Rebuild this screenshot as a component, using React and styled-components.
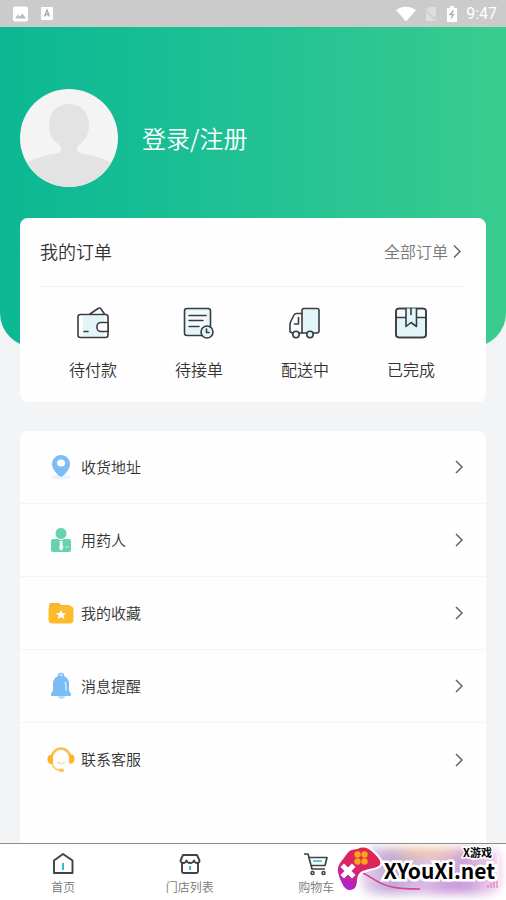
import styled, { createGlobalStyle } from "styled-components";

const GlobalStyle = createGlobalStyle`
  * {
    box-sizing: border-box;
  }
  body {
    margin: 0;
    background: #f3f4f6;
    color: #333;
    font-family: "Noto Sans CJK SC", "Noto Sans", sans-serif;
    font-weight: 350;
  }
  button {
    border: none;
    padding: 0;
    background: none;
    color: inherit;
    font: inherit;
    cursor: pointer;
  }
  a {
    color: inherit;
    text-decoration: none;
  }
  svg {
    display: block;
    flex: none;
  }
`;

const Page = styled.div`
  min-height: 100vh;
  display: flex;
  flex-direction: column;
`;

const StatusBar = styled.div`
  height: 27px;
  padding: 0 9px 0 12px;
  display: flex;
  align-items: center;
  justify-content: space-between;
  background: #cbcbcb;
  color: #fff;
`;

const StatusGroup = styled.div`
  display: flex;
  align-items: center;
  gap: ${(props) => props.$gap};
`;

const Clock = styled.span`
  font-family: Roboto, sans-serif;
  font-size: 16px;
  font-weight: 400;
  line-height: 27px;
`;

const Hero = styled.header`
  padding: 62px 20px 160px;
  background: linear-gradient(90deg, #0bb893, #21c194 50%, #39cc8f);
  border-radius: 0 0 34px 34px;
`;

const Profile = styled.button`
  display: flex;
  align-items: center;
  gap: 24px;
  color: #fff;
  font-size: 24px;
  line-height: 36px;
`;

const Card = styled.section`
  margin: 0 20px;
  background: #fefefe;
  border-radius: ${(props) => (props.$open ? "8px 8px 0 0" : "8px")};
`;

const OrderCard = styled(Card)`
  margin-top: -129px;
  margin-bottom: 29px;
  padding: 0 22px 0 20px;
`;

const MenuCard = styled(Card)`
  flex: 1;
  padding-bottom: 45px;
`;

const CardHead = styled.div`
  height: 69px;
  padding: 0 2px 2px 0;
  display: flex;
  align-items: center;
  justify-content: space-between;
  border-bottom: 1px solid #f2f2f2;
`;

const CardTitle = styled.h2`
  margin: 0;
  font-size: 18px;
  font-weight: 350;
  line-height: 28px;
`;

const AllOrders = styled.a`
  display: flex;
  align-items: center;
  gap: 4px;
  color: #777;
  font-size: 16px;
  line-height: 24px;
`;

const OrderGrid = styled.div`
  display: grid;
  grid-template-columns: repeat(4, 1fr);
  padding: 18px 0 21px;
`;

const OrderItem = styled.button`
  display: flex;
  flex-direction: column;
  align-items: center;
  gap: 16px;
  font-size: 16px;
  line-height: 24px;
`;

const MenuRow = styled.a`
  height: 73px;
  padding: 0 22px 0 27px;
  display: flex;
  align-items: center;
  gap: 6px;
  font-size: 15px;
  border-bottom: 1px solid #f4f4f5;
  &:last-child {
    border-bottom: none;
  }
`;

const MenuLabel = styled.span`
  flex: 1;
  padding-bottom: 2px;
`;

const TabBar = styled.nav`
  position: relative;
  height: 57px;
  display: grid;
  grid-template-columns: repeat(4, 1fr);
  background: #fff;
  border-top: 1px solid #8b8b8b;
`;

const Tab = styled.a`
  display: flex;
  flex-direction: column;
  align-items: center;
  padding-top: 7px;
  gap: 1px;
  color: #777;
  font-size: 12px;
  line-height: 18px;
`;

const Badge = styled.div`
  position: absolute;
  right: 0;
  top: 0;
  width: 171px;
  height: 56px;
  overflow: hidden;
`;

const Glow = styled.div`
  position: absolute;
  inset: 4px 5px 6px 26px;
  border-radius: 12px;
  background:
    radial-gradient(ellipse 34px 12px at 40% 4%, #eec092, transparent),
    radial-gradient(ellipse 26px 12px at 60% 6%, #efc0a8, transparent),
    radial-gradient(ellipse 36px 14px at 62% 90%, #c795dc, transparent),
    linear-gradient(90deg, #e9d5ee, #bfa6d6 22%, #e2c8ea 50%, #c9a0dc 72%, #f6d4ea);
  filter: blur(5px);
`;

const PadIcon = styled.svg`
  position: absolute;
  left: 0;
  top: 1px;
`;

const BadgeText = styled.div`
  position: absolute;
  right: ${(props) => props.$right};
  top: ${(props) => props.$top};
  color: #000;
  font-size: ${(props) => props.$size};
  line-height: ${(props) => props.$size};
  font-weight: 700;
  white-space: nowrap;
  -webkit-text-stroke: ${(props) => props.$outline} #fff;
  paint-order: stroke fill;
`;

const Chevron = ({ color = "#666", size = 14 }) => (
  <svg width="10" height={size} viewBox="0 0 10 14" fill="none" stroke={color} strokeWidth="1.5">
    <path d="M2 1l6 6-6 6" />
  </svg>
);

const Avatar = () => (
  <svg width="98" height="98" viewBox="0 0 98 98">
    <defs>
      <clipPath id="face">
        <circle cx="49" cy="49" r="49" />
      </clipPath>
    </defs>
    <g clipPath="url(#face)">
      <rect width="98" height="98" fill="#f4f4f4" />
      <path
        fill="#e4e3e3"
        d="M49 15c12 0 20 9 20 21 0 9-3 14-8 18-3 2-4 4-4 6 0 3 2 4 6 5 10 1 19 4 27 8l8 25H0l8-25c8-4 17-7 27-8 4-1 6-2 6-5 0-2-1-4-4-6-5-4-8-9-8-18 0-12 8-21 20-21z"
      />
    </g>
  </svg>
);

const OrderSvg = ({ children }) => (
  <svg
    width="36"
    height="36"
    viewBox="0 0 36 36"
    fill="none"
    stroke="#3a3d40"
    strokeWidth="1.6"
    strokeLinejoin="round"
    strokeLinecap="round"
  >
    {children}
  </svg>
);

const WalletIcon = () => (
  <OrderSvg>
    <path d="M8 11h21v21H8z" fill="#e2f6f9" stroke="none" />
    <path d="M15 9l8-5.500c1.500-1 2.500-.5 3 .5l3.500 5" />
    <rect x="3" y="9.500" width="30" height="23" rx="2.500" />
    <path d="M33 17.500h-7a4 4 0 0 0-4 4v1a4 4 0 0 0 4 4h7z" fill="#fff" />
    <path d="M9 26.500h4" />
  </OrderSvg>
);

const ReceiptIcon = () => (
  <OrderSvg>
    <rect x="3.500" y="3.500" width="26" height="27" rx="2.500" fill="#e2f6f9" />
    <path d="M6 6h19v17H6z" fill="#f5fbfc" stroke="none" />
    <path d="M8 10.500h17M8 15.500h14M8 21.500h10" />
    <circle cx="26" cy="27" r="6" fill="#e2f6f9" />
    <path d="M25.500 24v3.500H28" />
  </OrderSvg>
);

const TruckIcon = () => (
  <OrderSvg>
    <path d="M15 28V5.500a2 2 0 0 1 2-2h13a2 2 0 0 1 2 2V26a2 2 0 0 1-2 2z" fill="#e2f6f9" />
    <path d="M15 8.500H9.500c-1 0-2 .5-2.500 1.500l-3.500 7-.5 2v7.500l2 1.500h10" />
    <path d="M11.500 12.500V19H7.500" />
    <circle cx="9" cy="29.500" r="3.200" fill="#e2f6f9" />
    <circle cx="23" cy="29.500" r="3.200" fill="#e2f6f9" />
  </OrderSvg>
);

const ParcelIcon = () => (
  <OrderSvg>
    <rect x="3" y="3.500" width="30" height="29" rx="3" fill="#e2f6f9" />
    <path d="M4 5h28v7H4z" fill="#f5fbfc" stroke="none" />
    <path d="M3 12.500h10M23 12.500h10" />
    <rect x="3" y="3.500" width="30" height="29" rx="3" />
    <path d="M13 3.500v18l5-4 5.500 4v-18" fill="#e2f6f9" />
    <path d="M18 3.500v6" />
  </OrderSvg>
);

const MenuSvg = ({ children }) => (
  <svg width="28" height="28" viewBox="0 0 28 28">
    {children}
  </svg>
);

const PinIcon = () => (
  <MenuSvg>
    <ellipse cx="14" cy="24" rx="10" ry="2.500" fill="#eaf3fb" />
    <path d="M14 2c5 0 9 4 9 9 0 4-3 8-6 11l-3 2-3-2c-3-3-6-7-6-11 0-5 4-9 9-9z" fill="#7dbdf6" />
    <ellipse cx="14" cy="10" rx="4" ry="3.500" fill="#fff" />
  </MenuSvg>
);

const PatientIcon = () => (
  <MenuSvg>
    <rect x="4" y="13" width="20" height="13" rx="2" fill="#67d3ac" />
    <circle cx="14" cy="7.500" r="6" fill="#67d3ac" stroke="#fefefe" />
    <path d="M14 14.500l2 1-.7 1.500 1 5-2.300 3-1.800-3 .9-5-.9-1.500z" fill="#fff" />
    <path d="M18 21h4" stroke="#9fe5cb" strokeWidth="1.500" />
  </MenuSvg>
);

const FolderIcon = () => (
  <MenuSvg>
    <path d="M4 4h7c1 0 2 1 3 2h7c2 0 3 1 3 3v10H2V7c0-2 1-3 2-3z" fill="#f7b12c" />
    <rect x="1.500" y="7" width="25" height="17.500" rx="4" fill="#fbbb2d" />
    <path d="M14 11l1.500 3 3.500.3-2.600 2.200.9 3.500-3.300-1.800-3.300 1.800.9-3.500L9 14.300l3.500-.3z" fill="#fff" />
  </MenuSvg>
);

const BellIcon = () => (
  <MenuSvg>
    <circle cx="14" cy="4" r="2.500" fill="none" stroke="#7dbdf6" strokeWidth="1.500" />
    <path d="M14 3.500c5 0 8 4 8 8v7l2 3.500c.5 1-.3 2-1.300 2H5.300c-1 0-1.800-1-1.300-2l2-3.500v-7c0-4 3-8 8-8z" fill="#7dbdf6" />
    <path d="M11 24h7c0 1.800-1.500 3-3.500 3S11 25.800 11 24z" fill="#b9dcfb" />
    <path d="M18 10.500c1 1 1 2 1 3.500v4" fill="none" stroke="#d4eafd" strokeWidth="1.500" strokeLinecap="round" />
  </MenuSvg>
);

const ServiceIcon = () => (
  <MenuSvg>
    <path d="M4.500 13a9.500 10.500 0 0 1 19 0" fill="none" stroke="#f9c04c" strokeWidth="2.500" />
    <path d="M5 17c1 5 5 7.500 10 7.500" fill="none" stroke="#fbd077" strokeWidth="1.800" />
    <path d="M2.500 9H6v9H3.500C1.500 17.500.5 15.500.5 13.500s.5-4 2-4.500zM22 8.500h3.500c1.500.5 2 2.500 2 4.500s-1 4-2.500 4.500h-3z" fill="#fbb52b" />
    <path d="M10.500 15.500c1 3 6 3 7 0" fill="none" stroke="#fbe0a6" strokeWidth="1.500" />
    <rect x="12" y="22.500" width="5" height="3.500" rx="1.700" fill="#fbc552" />
  </MenuSvg>
);

const TabSvg = ({ children }) => (
  <svg width="26" height="26" viewBox="0 0 26 26" fill="none" stroke="#3f4145" strokeWidth="1.900" strokeLinejoin="round">
    {children}
  </svg>
);

const HomeIcon = () => (
  <TabSvg>
    <path d="M4 9.500l9-6.500 9.500 6.500v12.500H4z" />
    <path d="M13 12v7" stroke="#2cb9c4" />
  </TabSvg>
);

const StoreIcon = () => (
  <TabSvg>
    <path d="M5 11v9.500c0 1 .5 1.500 1.500 1.500h13c1 0 1.500-.5 1.500-1.500V11" />
    <path d="M6 4h14l2.500 5.500c0 1.500-1 2.500-2.500 2.500s-2.500-1-3-2.500c-.5 1.500-2 2.500-4 2.500s-3-1-3.500-2.500C9 11 8 12 6.500 12S3.500 11 3.500 9.500z" />
    <path d="M13 15v4" stroke="#2cb9c4" />
  </TabSvg>
);

const CartIcon = () => (
  <TabSvg>
    <path d="M1 3h4l4 15h13" strokeWidth="1.700" />
    <path d="M6 6.500h18L22 14.500H8.500" strokeWidth="1.700" />
    <path d="M10 10h9" stroke="#2cb9c4" strokeWidth="1.500" />
    <circle cx="9.500" cy="22" r="1.500" strokeWidth="1.500" />
    <circle cx="20.500" cy="22" r="1.500" strokeWidth="1.500" />
  </TabSvg>
);

const orders = [
  { label: "待付款", Icon: WalletIcon },
  { label: "待接单", Icon: ReceiptIcon },
  { label: "配送中", Icon: TruckIcon },
  { label: "已完成", Icon: ParcelIcon },
];

const menu = [
  { label: "收货地址", Icon: PinIcon },
  { label: "用药人", Icon: PatientIcon },
  { label: "我的收藏", Icon: FolderIcon },
  { label: "消息提醒", Icon: BellIcon },
  { label: "联系客服", Icon: ServiceIcon },
];

const tabs = [
  { label: "首页", Icon: HomeIcon },
  { label: "门店列表", Icon: StoreIcon },
  { label: "购物车", Icon: CartIcon },
];

const SiteBadge = () => (
  <Badge>
    <Glow />
    <PadIcon width="170" height="50" viewBox="0 0 170 50">
      <defs>
        <linearGradient id="pad" x1="0.600" y1="0" x2="0.200" y2="1">
          <stop offset="0" stopColor="#e3264a" />
          <stop offset="0.500" stopColor="#d8246c" />
          <stop offset="1" stopColor="#a424e0" />
        </linearGradient>
      </defs>
      <path d="M28 28c9 4 14 11 29 14 9 2 18 2 28 2" fill="none" stroke="#d6438f" strokeWidth="1.500" />
      <path d="M157 6c4 0 6 2 6 6v29" fill="none" stroke="#fff" />
      <path d="M153 43v-3M156 43v-5M159 43v-7M162 43v-9" stroke="#dd6fae" />
      <path
        d="M13 6c3-3 5-2 9-3 4-2 8-2 12 0 4 2 6 5 9 8 3 3 4 6 3 9-2 4-9 4-15 6-5 1-8 4-8 9 0 4-1 8-4 10-4 2-8 1-11-3-3-5-5-9-6-15-1-5 1-8 4-12 3-3 4-6 7-9z"
        fill="url(#pad)"
        stroke="#fff"
        strokeWidth="2"
      />
      <g fill="#fba619">
        <circle cx="22.500" cy="9.500" r="3.200" />
        <circle cx="29.500" cy="9.500" r="3.200" />
        <circle cx="22.500" cy="16.500" r="3.200" />
        <circle cx="29.500" cy="16.500" r="3.200" />
      </g>
      <path d="M9 22l8 8M17 22l-8 8" stroke="#fff" strokeWidth="5" strokeLinecap="square" />
    </PadIcon>
    <BadgeText $right="14px" $top="3px" $size="11px" $outline="3px">
      X游戏
    </BadgeText>
    <BadgeText $right="11px" $top="16px" $size="21px" $outline="5px">
      XYouXi.net
    </BadgeText>
  </Badge>
);

const App = () => {
  return (
    <>
      <GlobalStyle />
      <Page>
        <StatusBar>
          <StatusGroup $gap="12px">
            <svg width="17" height="16" viewBox="0 0 17 16">
              <rect x="1" y="0.500" width="15" height="15" rx="2" fill="#fff" />
              <path d="M3 12.500l3-4 2 2 2.500-3 3.500 5z" fill="#bdbdbd" />
            </svg>
            <svg width="12" height="13" viewBox="0 0 12 13">
              <rect width="12" height="13" rx="1" fill="#fff" />
              <path d="M3.500 9.500L6 3l2.500 6.500M4.500 7.500h3" fill="none" stroke="#a8a8a8" strokeWidth="1.300" />
            </svg>
          </StatusGroup>
          <StatusGroup $gap="8px">
            <svg width="20" height="16" viewBox="0 0 20 16">
              <path d="M0 4C6-.5 14-.5 20 4L10 15.500z" fill="#fff" />
            </svg>
            <svg width="14" height="16" viewBox="0 0 14 16">
              <path d="M5 1h7v11L3 4zM2 5l9 10H2z" fill="#dedede" />
              <path d="M1 2l12 13" stroke="#dedede" />
            </svg>
            <svg width="12" height="16" viewBox="0 0 12 16">
              <path d="M4 0h4v2h3v14H1V2h3z" fill="#fff" />
              <path d="M7.500 4.500L4 8.500h3.500L5 12.500" fill="none" stroke="#aaa" strokeWidth="1.300" />
            </svg>
            <Clock>9:47</Clock>
          </StatusGroup>
        </StatusBar>

        <Hero>
          <Profile type="button">
            <Avatar />
            登录/注册
          </Profile>
        </Hero>

        <OrderCard>
          <CardHead>
            <CardTitle>我的订单</CardTitle>
            <AllOrders href="#orders">
              全部订单
              <Chevron size={15} />
            </AllOrders>
          </CardHead>
          <OrderGrid>
            {orders.map(({ label, Icon }) => (
              <OrderItem type="button" key={label}>
                <Icon />
                {label}
              </OrderItem>
            ))}
          </OrderGrid>
        </OrderCard>

        <MenuCard $open>
          {menu.map(({ label, Icon }) => (
            <MenuRow href="#menu" key={label}>
              <Icon />
              <MenuLabel>{label}</MenuLabel>
              <Chevron />
            </MenuRow>
          ))}
        </MenuCard>

        <TabBar>
          {tabs.map(({ label, Icon }) => (
            <Tab href="#tab" key={label}>
              <Icon />
              {label}
            </Tab>
          ))}
          <SiteBadge />
        </TabBar>
      </Page>
    </>
  );
};

export default App;
